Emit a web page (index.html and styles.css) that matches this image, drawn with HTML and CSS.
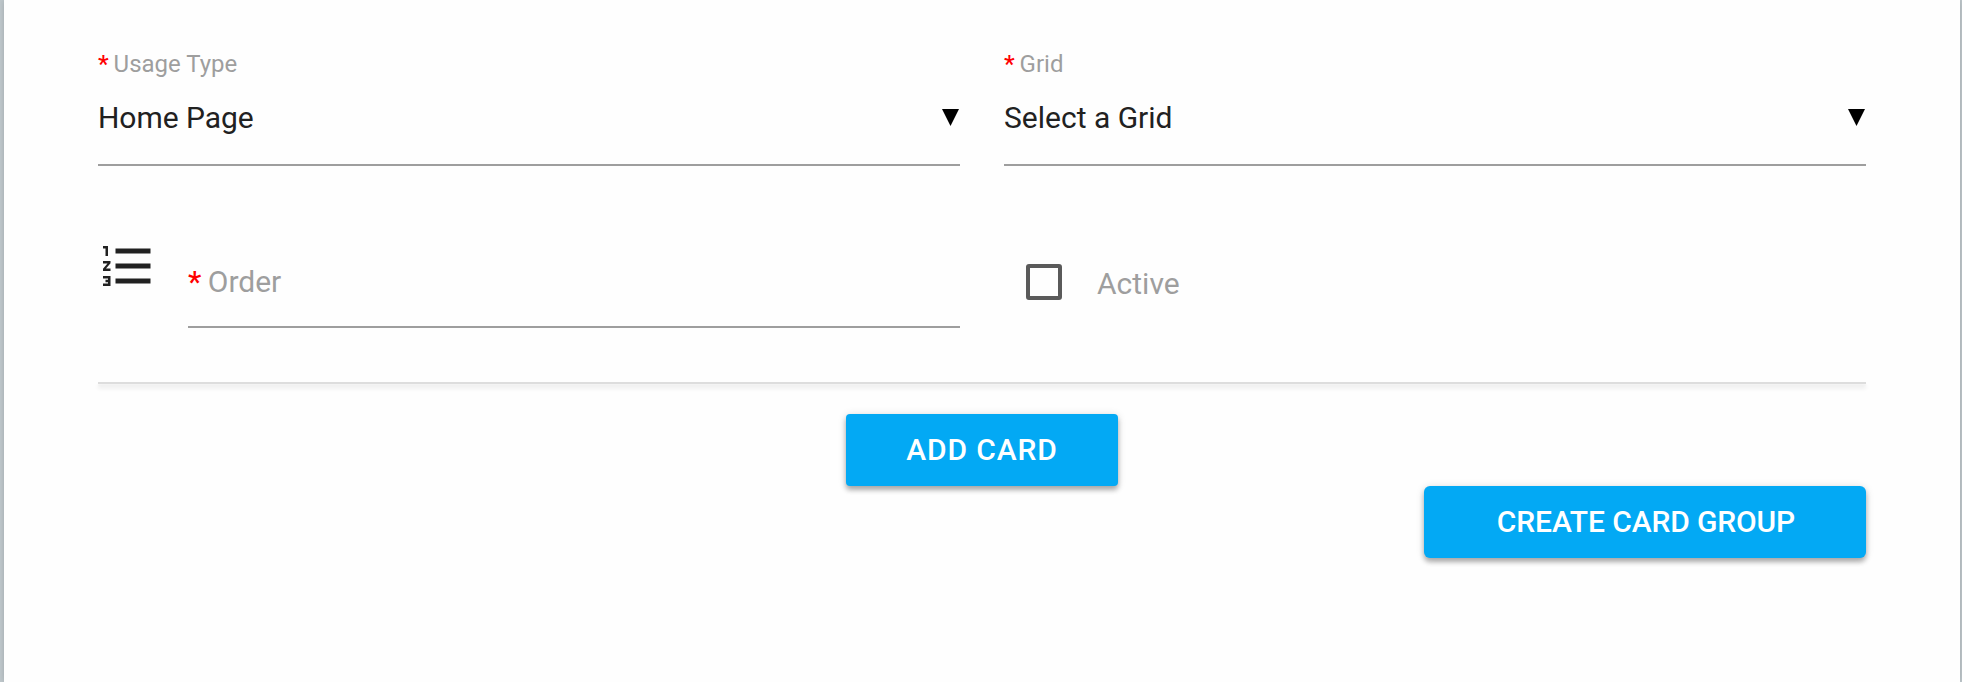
FILE: index.html
```
<!DOCTYPE html>
<html lang="en">
<head>
<meta charset="utf-8">
<title>Card Group</title>
<link rel="stylesheet" href="styles.css">
</head>
<body>
<main class="panel">
  <form class="form">
    <div class="row">
      <div class="field">
        <div class="label"><span class="req">*</span> <span class="usage">Usage Type</span></div>
        <div class="select"><span class="value home">Home Page</span><svg class="caret" viewBox="0 0 17 17"><path d="M0 0h17L8.5 17z"/></svg></div>
      </div>
      <div class="field">
        <div class="label"><span class="req">*</span> <span class="grid">Grid</span></div>
        <div class="select"><span class="value pick">Select a Grid</span><svg class="caret" viewBox="0 0 17 17"><path d="M0 0h17L8.5 17z"/></svg></div>
      </div>
    </div>
    <div class="row second">
      <div class="order">
        <svg class="icon" viewBox="0 0 24 24"><path d="M2 17h2v.5H3v1h1v.5H2v1h3v-4H2v1zm1-9h1V4H2v1h1v3zm-1 3h1.8L2 13.1v.9h3v-1H3.2L5 10.9V10H2v1zm5-6v2h14V5H7zm0 14h14v-2H7v2zm0-6h14v-2H7v2z"/></svg>
        <div class="input"><span class="req">*</span> <span class="name">Order</span></div>
      </div>
      <div class="check"><span class="box"></span><span class="active">Active</span></div>
    </div>
    <div class="divider"></div>
    <button type="button" class="btn add">ADD CARD</button>
    <button type="button" class="btn create">CREATE CARD GROUP</button>
  </form>
</main>
</body>
</html>
```
FILE: styles.css
```
* { box-sizing: border-box; }
body {
  margin: 0;
  background: #bfc8cc;
  font-family: Roboto, sans-serif;
  font-size: 30px;
  color: #212121;
}
.panel {
  height: 682px;
  margin: 0 2px 0 4px;
  padding: 46px 94px 0;
  background: #fefefe;
  box-shadow: 0 0 6px rgba(0, 0, 0, .16);
  overflow: hidden;
}
.form { display: flex; flex-direction: column; }
.row { display: grid; grid-template-columns: 862px 862px; column-gap: 44px; }
.field { height: 120px; border-bottom: 2px solid #9e9e9e; }
.label { height: 35px; line-height: 37px; font-size: 24px; color: #9e9e9e; white-space: nowrap; }
.req { color: #f00; font-weight: 500; margin-right: -1px; }
.select { display: flex; align-items: flex-start; justify-content: space-between; padding: 18px 1px 0 0; }
.value { line-height: 38px; }
.home { letter-spacing: -.05px; }
.caret { width: 17px; height: 17px; margin-top: 10px; fill: #000; }
.second { margin-top: 70px; height: 92px; }
.order { display: flex; justify-content: space-between; }
.icon { width: 60px; height: 60px; margin-left: -.5px; fill: #212121; }
.input { width: 772px; height: 92px; padding-top: 27px; line-height: 38px; color: #9e9e9e; border-bottom: 2px solid #9e9e9e; }
.check { display: flex; align-items: flex-start; padding: 28px 0 0 22px; color: #9e9e9e; }
.box { width: 36px; height: 36px; border: 4px solid #5a5a5a; border-radius: 3px; }
.active { margin: 1px 0 0 35px; line-height: 38px; }
.divider { height: 2px; margin-top: 54px; background: #ddd; box-shadow: 0 4px 4px rgba(0, 0, 0, .12), 0 2px 2px rgba(0, 0, 0, .03); }
.btn {
  height: 72px;
  padding: 0 0 1px;
  border: 0;
  background: #03a9f4;
  color: #fff;
  font: 500 30px/71px Roboto, sans-serif;
  white-space: nowrap;
  box-shadow: 0 4px 5px rgba(0, 0, 0, .28), 0 1px 8px rgba(0, 0, 0, .14);
}
.add { width: 272px; margin: 30px 0 0 748px; border-radius: 4px; letter-spacing: .9px; }
.create { align-self: flex-end; width: 442px; padding-left: 2px; border-radius: 6px; letter-spacing: -.12px; }
```
